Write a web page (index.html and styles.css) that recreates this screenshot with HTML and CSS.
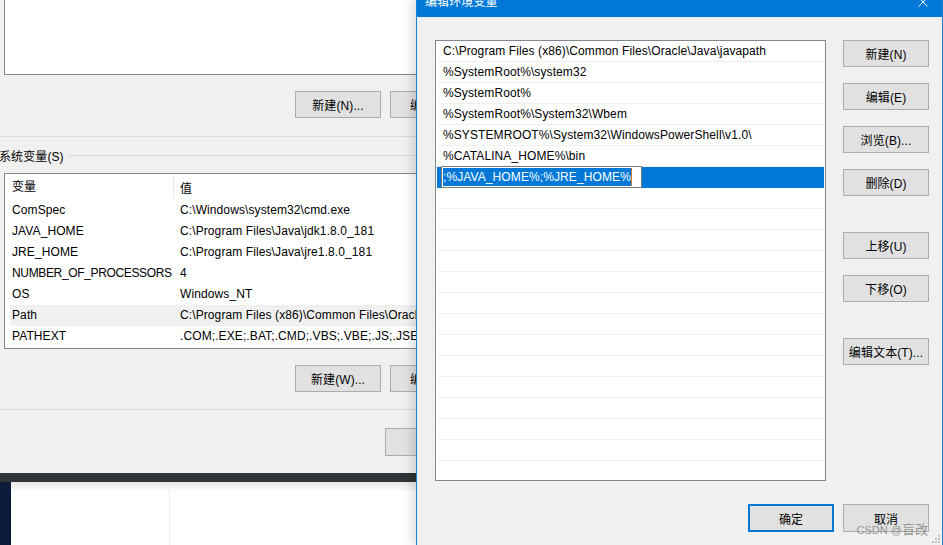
FILE: index.html
```html
<!DOCTYPE html>
<html lang="zh-CN">
<head>
    <meta charset="UTF-8">
    <title>编辑环境变量</title>
    <link rel="stylesheet" href="styles.css">
</head>
<body>
<div class="desktop">

    <!-- 环境变量 窗口 (后面) -->
    <div class="env-window">
        <div class="user-list"></div>

        <div class="btn-row">
            <button class="btn">新建(N)...</button>
            <button class="btn">编辑(I)...</button>
        </div>
        <div class="sep"></div>

        <div class="group-title"><span>系统变量(S)</span></div>
        <div class="var-table">
            <div class="var-head">
                <div class="head-name">变量</div>
                <div class="head-value">值</div>
            </div>
            <div class="var-row"><div class="col-name">ComSpec</div><div class="col-value">C:\Windows\system32\cmd.exe</div></div>
            <div class="var-row"><div class="col-name">JAVA_HOME</div><div class="col-value">C:\Program Files\Java\jdk1.8.0_181</div></div>
            <div class="var-row"><div class="col-name">JRE_HOME</div><div class="col-value">C:\Program Files\Java\jre1.8.0_181</div></div>
            <div class="var-row"><div class="col-name long-name">NUMBER_OF_PROCESSORS</div><div class="col-value">4</div></div>
            <div class="var-row"><div class="col-name">OS</div><div class="col-value">Windows_NT</div></div>
            <div class="var-row hover"><div class="col-name">Path</div><div class="col-value">C:\Program Files (x86)\Common Files\Oracle\Java\javapath</div></div>
            <div class="var-row"><div class="col-name">PATHEXT</div><div class="col-value">.COM;.EXE;.BAT;.CMD;.VBS;.VBE;.JS;.JSE;.WSF;.WSH;.MSC</div></div>
        </div>

        <div class="btn-row">
            <button class="btn">新建(W)...</button>
            <button class="btn">编辑(I)...</button>
        </div>
        <div class="sep sep-low"></div>

        <div class="footer-row">
            <button class="btn btn-tall">确定</button>
        </div>
    </div>

    <div class="dark-band"></div>
    <div class="below">
        <div class="navy-strip"></div>
        <div class="side-panel"></div>
        <div class="main-panel"></div>
    </div>

    <!-- 编辑环境变量 对话框 -->
    <div class="edit-dialog">
        <div class="title-bar">
            <span class="title-text">编辑环境变量</span>
            <svg class="close-icon" width="10" height="10" viewBox="0 0 10 10">
                <path d="M0.5 0.5 L9.5 9.5 M9.5 0.5 L0.5 9.5" stroke="#fff" stroke-width="1" fill="none"/>
            </svg>
        </div>

        <div class="dialog-body">
            <div class="path-list">
                <div class="path-item">C:\Program Files (x86)\Common Files\Oracle\Java\javapath</div>
                <div class="path-item">%SystemRoot%\system32</div>
                <div class="path-item">%SystemRoot%</div>
                <div class="path-item">%SystemRoot%\System32\Wbem</div>
                <div class="path-item">%SYSTEMROOT%\System32\WindowsPowerShell\v1.0\</div>
                <div class="path-item">%CATALINA_HOME%\bin</div>
                <div class="path-item selected">
                    <div class="inline-edit"><span class="sel-text">;%JAVA_HOME%;%JRE_HOME%</span></div>
                </div>
                <div class="path-item"></div>
                <div class="path-item"></div>
                <div class="path-item"></div>
                <div class="path-item"></div>
                <div class="path-item"></div>
                <div class="path-item"></div>
                <div class="path-item"></div>
                <div class="path-item"></div>
                <div class="path-item"></div>
                <div class="path-item"></div>
                <div class="path-item"></div>
                <div class="path-item"></div>
                <div class="path-item"></div>
                <div class="path-item"></div>
            </div>

            <div class="side-buttons">
                <button class="btn">新建(N)</button>
                <button class="btn">编辑(E)</button>
                <button class="btn">浏览(B)...</button>
                <button class="btn">删除(D)</button>
                <button class="btn btn-spaced">上移(U)</button>
                <button class="btn">下移(O)</button>
                <button class="btn btn-spaced">编辑文本(T)...</button>
            </div>
        </div>

        <div class="dialog-footer">
            <button class="btn btn-tall btn-default">确定</button>
            <button class="btn btn-tall">取消</button>
        </div>

        <div class="watermark"><span class="wm-latin">CSDN @</span>盲改</div>
        <svg class="size-grip" width="8" height="8" viewBox="0 0 8 8">
            <rect x="6" y="0" width="2" height="2" fill="#c4c4c4"/>
            <rect x="3" y="3" width="2" height="2" fill="#c4c4c4"/>
            <rect x="6" y="3" width="2" height="2" fill="#c4c4c4"/>
            <rect x="0" y="6" width="2" height="2" fill="#c4c4c4"/>
            <rect x="3" y="6" width="2" height="2" fill="#c4c4c4"/>
            <rect x="6" y="6" width="2" height="2" fill="#c4c4c4"/>
        </svg>
    </div>

</div>
</body>
</html>
```

FILE: styles.css
```css
body {
    margin: 0;
    font-family: "Liberation Sans", "Noto Sans CJK SC", sans-serif;
    font-size: 12px;
    letter-spacing: 0.1px;
    color: #000;
    background-color: #fff;
    overflow: hidden;
}
.desktop {
    position: relative;
    width: 943px;
    height: 545px;
    overflow: hidden;
}

/* buttons */
.btn {
    box-sizing: border-box;
    flex-shrink: 0;
    width: 86px;
    height: 27px;
    padding: 0;
    background-color: #e1e1e1;
    border: 1px solid #adadad;
    font-family: inherit;
    font-size: 12px;
    letter-spacing: 0.1px;
    color: #000;
}
.btn-tall {
    height: 28px;
}
.btn-default {
    border: 2px solid #0078d7;
}

/* left window */
.env-window {
    width: 416px;
    height: 473px;
    background-color: #f0f0f0;
    overflow: hidden;
}
.user-list {
    margin-left: 4px;
    width: 500px;
    height: 74px;
    background: white;
    border-left: 1px solid #828790;
    border-bottom: 1px solid #828790;
}
.btn-row {
    display: flex;
    gap: 9px;
    margin-top: 16px;
    padding-left: 295px;
}
.sep {
    height: 1px;
    margin-top: 18px;
    background-color: #dadada;
}
.sep-low {
    margin-top: 17px;
}
.group-title {
    display: flex;
    align-items: center;
    height: 16px;
    margin-top: 10px;
    margin-left: -1px;
}
.group-title::after {
    content: "";
    flex: 1;
    height: 1px;
    margin-left: 4px;
    background-color: #dcdcdc;
}
.var-table {
    margin-top: 10px;
    margin-left: 4px;
    width: 500px;
    height: 174px;
    background: white;
    border: 1px solid #828790;
}
.var-head {
    display: flex;
    align-items: center;
    height: 26px;
    margin-left: 5px;
}
.head-name {
    flex-shrink: 0;
    width: 161px;
    padding-left: 2px;
    line-height: 22px;
    border-right: 1px solid #e5e5e5;
}
.head-value {
    padding-left: 6px;
}
.var-row {
    display: flex;
    height: 21px;
    line-height: 21px;
    margin-left: 5px;
    white-space: nowrap;
}
.var-row.hover {
    background-color: #f0f0f0;
}
.col-name {
    flex-shrink: 0;
    width: 168px;
    padding-left: 2px;
}
.long-name {
    letter-spacing: -0.35px;
}
.footer-row {
    margin-top: 18px;
    padding-left: 385px;
}

/* desktop below */
.dark-band {
    height: 9px;
    background-color: #313436;
}
.below {
    display: flex;
    height: 63px;
}
.navy-strip {
    width: 11px;
    background-color: #0b1b39;
}
.side-panel {
    width: 158px;
    border-right: 1px solid #ececec;
    background: linear-gradient(#e6e6e6, #fff 10px);
}
.main-panel {
    flex: 1;
    background: linear-gradient(#e6e6e6, #fff 10px);
}

/* edit dialog */
.edit-dialog {
    position: absolute;
    left: 416px;
    top: 0;
    width: 525px;
    height: 545px;
    background-color: #f0f0f0;
    border-left: 1px solid #1883d7;
    border-right: 1px solid #1883d7;
    box-shadow: -5px 0 8px rgba(0, 0, 0, 0.12);
}
.title-bar {
    display: flex;
    justify-content: space-between;
    align-items: center;
    height: 30px;
    margin-top: -13px;
    padding: 0 14px 0 8px;
    background-color: #0078d7;
    color: white;
    line-height: 30px;
}
.dialog-body {
    display: flex;
    gap: 17px;
    margin-top: 23px;
    padding-left: 18px;
}
.path-list {
    box-sizing: border-box;
    width: 391px;
    height: 441px;
    background: white;
    border: 1px solid #828790;
    overflow: hidden;
}
.path-item {
    position: relative;
    height: 20px;
    line-height: 20px;
    margin: 0 1px;
    padding-left: 6px;
    border-bottom: 1px solid #f0f0f0;
    white-space: nowrap;
}
.path-item.selected {
    background-color: #0078d7;
    border-bottom-color: #0078d7;
}
.inline-edit {
    position: absolute;
    left: 4px;
    top: -1px;
    box-sizing: border-box;
    width: 201px;
    height: 22px;
    padding: 1px 0 0 1px;
    background: white;
    border: 1px solid #7a7a7a;
    line-height: 18px;
}
.sel-text {
    display: inline-block;
    background-color: #0078d7;
    color: white;
    border-right: 1px solid #c87a2c;
}
.side-buttons {
    display: flex;
    flex-direction: column;
    gap: 16px;
}
.btn-spaced {
    margin-top: 20px;
}
.dialog-footer {
    display: flex;
    justify-content: flex-end;
    gap: 9px;
    margin-top: 23px;
    padding-right: 13px;
}
.watermark {
    position: absolute;
    right: 14px;
    bottom: 7px;
    font-size: 13px;
    letter-spacing: 0;
    color: rgba(120, 120, 120, 0.75);
}
.wm-latin {
    font-size: 11px;
}
.size-grip {
    position: absolute;
    right: 2px;
    bottom: 2px;
}
```
